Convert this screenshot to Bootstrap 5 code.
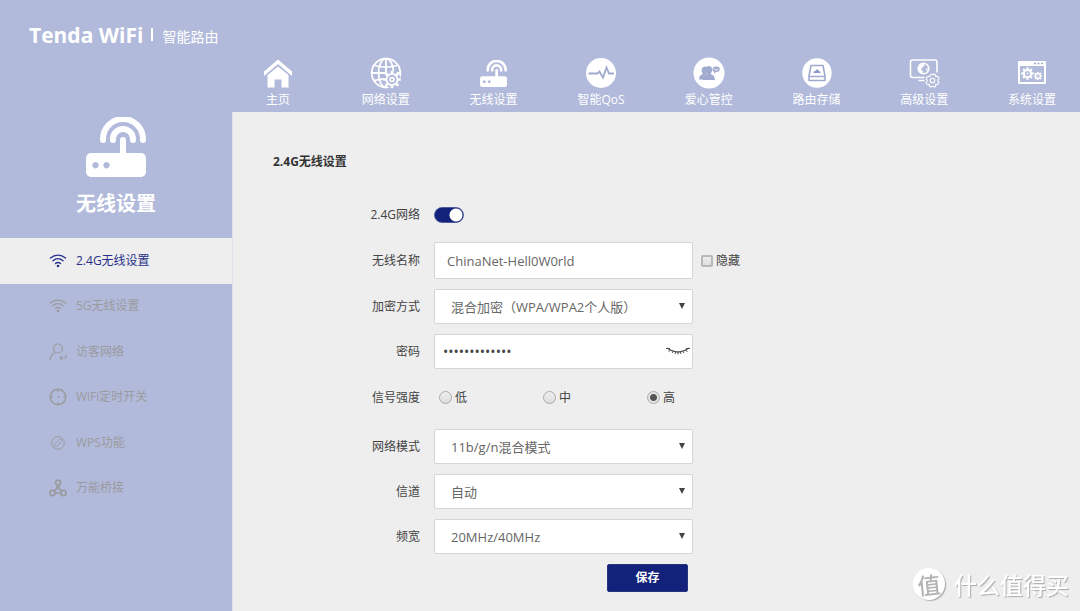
<!DOCTYPE html>
<html lang="zh-CN">
<head>
<meta charset="utf-8">
<meta name="viewport" content="width=device-width, initial-scale=1">
<title>Tenda WiFi</title>
<link href="https://cdn.jsdelivr.net/npm/bootstrap@5.3.0/dist/css/bootstrap.min.css" rel="stylesheet">
<style>
:root { --sky: #b1bada; --navy: #12217a; --page: #eeeeee; --line: #d5d5d5; }
body { background: var(--page); color: #444; font: 12px/18px "Open Sans", "Noto Sans CJK SC", sans-serif; }
.topbar { background: var(--sky); height: 112px; }
.brand { padding: 20px 0 0 29px; width: 238px; color: #fff; line-height: 30px; }
.brand strong { font-size: 21px; }
.brand .bar { width: 2px; height: 13px; background: #fff; margin: 0 9px 0 8px; }
.brand .tag { font-size: 14px; padding-top: 2px; }
.topnav { padding: 55px 8px 0 0; }
.topnav a { width: 80px; color: #fff; }
.topnav svg { width: 36px; height: 36px; display: block; }
.workspace { min-height: calc(100vh - 112px); }
.side { width: 232px; background: var(--sky); }
.side-head { height: 126px; color: #fff; font-size: 20px; line-height: 30px; font-weight: 700; }
.side-head svg { width: 60px; height: 60px; margin: 5px 0 12px; }
.side .items { height: 273px; }
.side a.item { flex: 1 1 0; padding-left: 49px; gap: 9px; color: #9b9b9f; }
.side a.item svg { width: 18px; height: 18px; }
.side a.item.active { background: var(--page); color: #26308a; }
.content-area { border-left: 1px solid #dfe1ea; padding: 41px 0 20px 40px; }
h1 { font-size: 12px; line-height: 18px; font-weight: 700; color: #333; margin-bottom: 26px; }
.fields { row-gap: 10px; }
.fields .line-row { min-height: 35px; }
.fields .caption { width: 147px; margin-right: 14px; text-align: right; }
.fields .ctl { width: 259px; position: relative; }
.fields .hide-opt { margin-left: 8px; gap: 3px; }
.form-control, .form-select { border: 1px solid var(--line); border-radius: 2px; color: #666; font-size: 13px; line-height: 18px; height: 35px; background-color: #fff; padding: 8px 12px; }
.form-select { padding: 8px 24px 7px 16px; background-size: 6px 6px; background-position: right 7px top 13px;
  background-image: url("data:image/svg+xml,%3Csvg xmlns='http://www.w3.org/2000/svg' viewBox='0 0 6 6'%3E%3Cpath fill='%23444' d='M0 0h6L3 6z'/%3E%3C/svg%3E"); }
#ssid { height: 37px; }
#pwd { padding-left: 8px; padding-right: 32px; color: #444; font-size: 14px; }
.eye { position: absolute; right: 2px; top: 8px; width: 26px; height: 18px; padding: 0; border: 0; background: none; color: #555; }
.eye svg { display: block; width: 26px; height: 18px; }
.form-check-input.switch { width: 30px; height: 16px; border-radius: 8px; margin: 0; border: 1px solid #4f5a9b; background: radial-gradient(circle at 21px 7px, #fff 0 6px, var(--navy) 7px); box-shadow: none; }
.form-check-input.tick, .form-check-input.dot { width: 12px; height: 12px; margin: 0; border: 1px solid #aaa; background: linear-gradient(#eee, #ddd); box-shadow: none; }
.form-check-input.tick { border-radius: 2px; border-width: 2px; border-color: #b8b8b8; }
.form-check-input.dot { width: 13px; height: 13px; }
.form-check-input.dot:checked { background: radial-gradient(circle, #555 0 3px, #e4e4e4 4px); }
.fields .levels { min-height: 40px; padding-bottom: 3px; }
.levels .opt { width: 104px; gap: 3px; padding-left: 5px; }
.save { width: 81px; height: 28px; margin-left: 334px; padding: 0; border-radius: 2px; font-size: 12px; font-weight: 700; line-height: 18px; color: #fff; background: var(--navy); border: 1px solid #28347f; }
.stamp { position: fixed; right: 11px; bottom: 10px; gap: 9px; color: #fff; font: 500 23px/34px "Noto Sans CJK SC", sans-serif; text-shadow: 1px 1px 1px #aaa; }
.stamp .seal { width: 32px; height: 32px; color: #b4b4b4; text-shadow: none; background: #fff; box-shadow: 1px 1px 1px #aaa; transform: rotate(-6deg); }
</style>
</head>
<body>
<svg class="d-none" xmlns="http://www.w3.org/2000/svg">
  <symbol id="router" viewBox="0 0 60 60">
    <g fill="none" stroke="currentColor" stroke-width="6" stroke-linecap="round">
      <path d="M17 23v-1a20 20 0 0 1 40 0v1M27 23v-1a10 10 0 0 1 20 0v1M37 23v16"/></g>
    <path fill="currentColor" fill-rule="evenodd" d="M5 36h50a5 5 0 0 1 5 5v14a5 5 0 0 1-5 5H5a5 5 0 0 1-5-5V41a5 5 0 0 1 5-5zM9.500 45a3.200 3.200 0 1 0 .01 0zM20.500 45a3.200 3.200 0 1 0 .01 0z"/>
  </symbol>
  <symbol id="wifi" viewBox="0 0 18 18">
    <g fill="none" stroke="currentColor" stroke-width="1.400" stroke-linecap="round"><path d="M1.500 6C6 2.200 12 2.200 16.500 6M4 8.800c3-2.700 7-2.700 10 0M6.500 11.500c1.600-1.400 3.400-1.400 5 0"/></g>
    <circle cx="9" cy="14" r="1.300" fill="currentColor"/>
  </symbol>
  <symbol id="gear" viewBox="-10 -10 20 20">
    <circle r="5.500" fill="none" stroke="currentColor" stroke-width="3"/>
    <g stroke="currentColor" stroke-width="3.600"><path d="M0-9.500v4M0 9.500v-4M-9.500 0h4M9.500 0h-4M-6.700-6.700l2.800 2.800M6.700 6.700 3.900 3.900M-6.700 6.700l2.800-2.800M6.700-6.700 3.900-3.900"/></g>
    <circle r="1.400" fill="currentColor" stroke="none"/>
  </symbol>
  <symbol id="gear-thin" viewBox="-10 -10 20 20">
    <circle r="6.200" fill="none" stroke="currentColor" stroke-width="2"/>
    <circle r="2.200" fill="none" stroke="currentColor" stroke-width="1.800"/>
    <g stroke="currentColor" stroke-width="3"><path d="M0-9.800v3M0 9.800v-3M-9.800 0h3M9.800 0h-3M-7-7l2.200 2.200M7 7 4.800 4.800M-7 7l2.200-2.200M7-7 4.800-4.800"/></g>
  </symbol>
</svg>

<header class="topbar d-flex">
  <div class="brand d-flex align-items-start flex-shrink-0">
    <strong>Tenda WiFi</strong><span class="bar mt-2"></span><span class="tag">智能路由</span>
  </div>
  <nav class="topnav d-flex flex-grow-1 justify-content-between">
    <a href="#" class="d-flex flex-column align-items-center text-decoration-none">
      <svg viewBox="0 0 36 36" fill="#fff"><path d="M18 4.500 32 16.500V21L18 9 4 21v-4.500z"/><path d="M18 11.500 28.500 20v12.500h-7V24.500h-7v8h-7V20z"/></svg>主页</a>
    <a href="#" class="d-flex flex-column align-items-center text-decoration-none">
      <svg viewBox="0 0 36 36" fill="none" stroke="#fff" stroke-width="1.800"><circle cx="18" cy="18" r="14.300"/><ellipse cx="18" cy="18" rx="7.500" ry="14.300"/><path d="M18 4v28M4 18h28M7 10.500c7 2 15 2 22 0M6 25.500c7-2 17-2 24 0"/><circle cx="24" cy="24.300" r="8.600" fill="#b1bada" stroke="none"/><use href="#gear-thin" x="15" y="15.500" width="18" height="18"/></svg>网络设置</a>
    <a href="#" class="d-flex flex-column align-items-center text-decoration-none">
      <svg viewBox="0 0 36 36"><use href="#router" x="5" y="5" width="27" height="27"/></svg>无线设置</a>
    <a href="#" class="d-flex flex-column align-items-center text-decoration-none">
      <svg viewBox="0 0 36 36"><circle cx="18" cy="18" r="15" fill="#fff"/><path d="M5.500 18.500h9l2-2 3.500 6 3.500-10 2.500 6H31" fill="none" stroke="#9faace" stroke-width="1.800"/></svg>智能QoS</a>
    <a href="#" class="d-flex flex-column align-items-center text-decoration-none">
      <svg viewBox="0 0 36 36"><circle cx="18" cy="18" r="15.500" fill="#fff"/><g fill="#9faace"><path d="M8 24.500c0-3 1.500-4.500 4-5.500-2-2.500-2-7 2-7.500 1 0 1.500.2 2 .6-1.600 2.200-1.400 5 0 7-3 1.200-4 3-4.200 5.400z"/><path d="M11.500 25c.3-4 2.300-5 4.800-6-3-3.500-1.800-8 1.600-8s4.500 4.500 1.600 8c2.500 1 4.200 2 4.500 6z"/><path d="M25 11.500c3 0 3.800 1 3.800 2.800 0 2-1.800 3-4.300 3l-1.500 1.500v-2c-1-.5-1.500-1.300-1.500-2.300 0-2 1.500-3 3.500-3z"/></g><path d="m23.300 13.600 1.800 2 2-2" stroke="#fff" fill="none"/></svg>爱心管控</a>
    <a href="#" class="d-flex flex-column align-items-center text-decoration-none">
      <svg viewBox="0 0 36 36"><circle cx="18" cy="18" r="14.700" fill="#fff"/><path d="M12 10.500h12l2 10.500v4.500H10V21zM10 21.500h16" fill="none" stroke="#9faace" stroke-width="1.600" stroke-linejoin="round"/><path d="M14.500 18c0-1.500 1-2 2-2 .5-2 3-2 3.300 0 1.300 0 2 1 1.700 2z" fill="#8d99c5"/></svg>路由存储</a>
    <a href="#" class="d-flex flex-column align-items-center text-decoration-none">
      <svg viewBox="0 0 36 36" fill="none" stroke="#fff" stroke-width="1.600"><path d="M18.500 22.500H6.500a2 2 0 0 1-2-2V7a2 2 0 0 1 2-2H29a2 2 0 0 1 2 2v10.500M12.500 25.500h6"/><circle cx="17.500" cy="13.500" r="5.300"/><path d="M17 8.500c-4 1-5 5-3 9 2 1 3 .5 3-1l-2-2 1-2 3-2zM20 14l2-1-1 3z" fill="#fff" stroke="none"/><path d="M24 21.500Q24.500 19 26 19Q26.500 20.500 28 19Q30 19 29.700 21.500Q33 21 33 23.500Q30.500 25.500 33 27.500Q32.500 30 29.700 29.500Q30 32 28 32Q26.500 30.500 25 32Q23 31.500 23.500 29.500Q20.500 30 20 27.500Q22.500 25.500 20 23.500Q20.500 21 24 21.500z" stroke-width="1.100"/><circle cx="26.500" cy="25.500" r="2.300" stroke-width="1.100"/></svg>高级设置</a>
    <a href="#" class="d-flex flex-column align-items-center text-decoration-none">
      <svg viewBox="0 0 36 36"><path d="M5 6h26a1 1 0 0 1 1 1v21a1 1 0 0 1-1 1H5a1 1 0 0 1-1-1V7a1 1 0 0 1 1-1zM6 11v16h24V11z" fill="#fff" fill-rule="evenodd"/><path d="M20 8.500h2M23.500 8.500h2M27 8.500h2" stroke="#9faace" stroke-width="1.500"/><use href="#gear" x="7" y="12" width="13" height="13"/><use href="#gear" x="19.500" y="16.500" width="9" height="9"/></svg>系统设置</a>
  </nav>
</header>

<div class="workspace d-flex">
  <aside class="side flex-shrink-0">
    <div class="side-head d-flex flex-column align-items-center"><svg><use href="#router"/></svg><span>无线设置</span></div>
    <nav class="items d-flex flex-column">
      <a href="#" class="item active d-flex align-items-center text-decoration-none"><svg><use href="#wifi"/></svg>2.4G无线设置</a>
      <a href="#" class="item d-flex align-items-center text-decoration-none"><svg><use href="#wifi"/></svg>5G无线设置</a>
      <a href="#" class="item d-flex align-items-center text-decoration-none"><svg viewBox="0 0 18 18" fill="none" stroke="currentColor" stroke-width="1.200"><circle cx="9" cy="5.500" r="4.500"/><path d="M1 17c.5-4 2.500-6.500 5.500-7.500M17 12v3h-6M13 13l-2 2 2 2"/></svg>访客网络</a>
      <a href="#" class="item d-flex align-items-center text-decoration-none"><svg viewBox="0 0 18 18" fill="none" stroke="currentColor" stroke-width="1.600"><circle cx="9" cy="9" r="7.700"/><path d="M9 1v3M9 14v3M1 9h3M14 9h3" stroke-width="1.200"/><circle cx="9.500" cy="9" r="1" fill="currentColor" stroke="none"/></svg>WiFi定时开关</a>
      <a href="#" class="item d-flex align-items-center text-decoration-none"><svg viewBox="0 0 18 18" fill="none" stroke="currentColor"><circle cx="9" cy="9" r="6.300"/><path d="m8 8 2.500-2.500c1.500-1 3 .7 2 2L10 10M10 10l-2.500 2.500c-1.500 1-3-.7-2-2L8 8"/></svg>WPS功能</a>
      <a href="#" class="item d-flex align-items-center text-decoration-none"><svg viewBox="0 0 18 18" fill="none" stroke="currentColor" stroke-width="1.700"><circle cx="9" cy="3.700" r="2.500"/><circle cx="3.500" cy="14" r="2.600"/><circle cx="14.500" cy="14" r="2.600"/><path d="M8 6.200v3.300L5 12M10 6.200v3.300l3 2.500M6.200 14h5.600"/></svg>万能桥接</a>
    </nav>
  </aside>

  <main class="content-area flex-grow-1">
    <h1>2.4G无线设置</h1>
    <form class="fields d-flex flex-column">
      <div class="line-row d-flex align-items-center"><label class="caption" for="radio24">2.4G网络</label><input class="form-check-input switch" type="checkbox" role="switch" id="radio24" checked></div>
      <div class="line-row d-flex align-items-center"><label class="caption" for="ssid">无线名称</label><div class="ctl"><input class="form-control" id="ssid" type="text" value="ChinaNet-Hell0W0rld"></div>
        <div class="hide-opt d-flex align-items-center"><input class="form-check-input tick" type="checkbox" id="hide"><label for="hide">隐藏</label></div></div>
      <div class="line-row d-flex align-items-center"><label class="caption" for="enc">加密方式</label><div class="ctl"><select class="form-select" id="enc"><option>混合加密（WPA/WPA2个人版）</option></select></div></div>
      <div class="line-row d-flex align-items-center"><label class="caption" for="pwd">密码</label><div class="ctl"><input class="form-control" id="pwd" type="password" value="1234567890123"><button class="eye" type="button" aria-label="显示密码"><svg viewBox="0 0 26 18" fill="none" stroke="currentColor"><path d="M2 6c7 5 15 5 22 0" stroke-width="1.500"/><path d="M1 6.500h4M25 6.500h-4M3.500 9.500 6 8M22.500 9.500 20 8M7 11l1.500-2M19 11l-1.500-2M10 12l.7-2M16 12l-.7-2M13 12.500V10"/></svg></button></div></div>
      <div class="line-row levels d-flex align-items-center"><span class="caption">信号强度</span>
        <div class="d-flex" role="radiogroup" aria-label="信号强度">
          <div class="opt d-flex align-items-center"><input class="form-check-input dot" type="radio" name="level" id="low"><label for="low">低</label></div>
          <div class="opt d-flex align-items-center"><input class="form-check-input dot" type="radio" name="level" id="mid"><label for="mid">中</label></div>
          <div class="opt d-flex align-items-center"><input class="form-check-input dot" type="radio" name="level" id="high" checked><label for="high">高</label></div>
        </div></div>
      <div class="line-row d-flex align-items-center"><label class="caption" for="mode">网络模式</label><div class="ctl"><select class="form-select" id="mode"><option>11b/g/n混合模式</option></select></div></div>
      <div class="line-row d-flex align-items-center"><label class="caption" for="chan">信道</label><div class="ctl"><select class="form-select" id="chan"><option>自动</option></select></div></div>
      <div class="line-row d-flex align-items-center"><label class="caption" for="band">频宽</label><div class="ctl"><select class="form-select" id="band"><option>20MHz/40MHz</option></select></div></div>
      <button class="btn save" type="submit">保存</button>
    </form>
  </main>
</div>
<div class="stamp d-flex align-items-center"><span class="seal rounded-circle d-flex align-items-center justify-content-center">值</span><span>什么值得买</span></div>
<script src="https://cdn.jsdelivr.net/npm/bootstrap@5.3.0/dist/js/bootstrap.bundle.min.js"></script>
</body>
</html>
